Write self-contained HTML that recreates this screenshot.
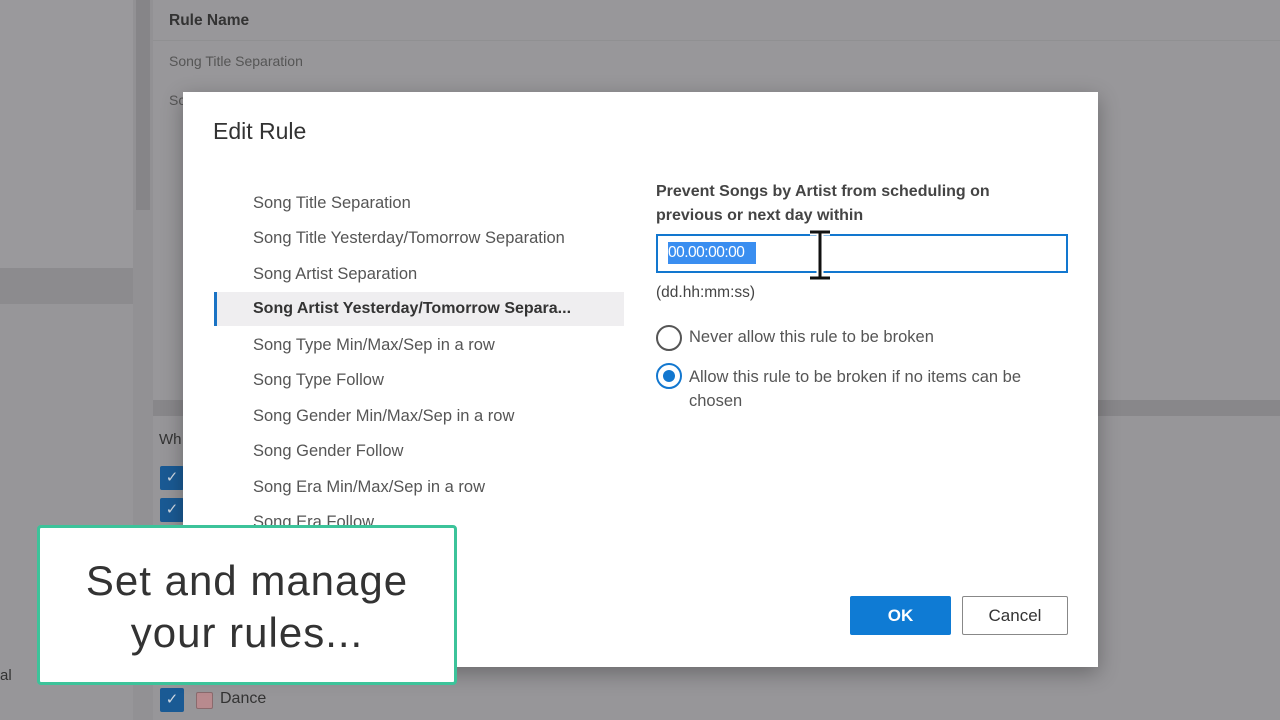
<!DOCTYPE html>
<html><head><style>
*{margin:0;padding:0;box-sizing:border-box}
body{width:1280px;height:720px;overflow:hidden;background:#979699;font-family:"Liberation Sans",sans-serif;position:relative}
.a{position:absolute}
.it{position:absolute;left:253px;font-size:16.5px;color:#555;white-space:nowrap}
.cb{position:absolute;left:160px;width:24px;height:24px;background:#1a5a94;border-radius:2px;color:#cfd8e2;font-size:15px;text-align:center;line-height:24px}
</style></head><body>
<div class="a" style="left:0;top:0;width:133px;height:268px;background:#9a999c"></div>
<div class="a" style="left:0;top:268px;width:133px;height:36px;background:#8c8b8e"></div>
<div class="a" style="left:133px;top:0;width:20px;height:720px;background:#929194"></div>
<div class="a" style="left:136px;top:0;width:14px;height:210px;background:#868588"></div>
<div class="a" style="left:153px;top:0;width:1127px;height:400px;background:#98979a"></div>
<div class="a" style="left:153px;top:40px;width:1127px;height:1px;background:#909092"></div>
<div class="a" style="left:169px;top:12px;font-size:15.5px;font-weight:bold;color:#333">Rule Name</div>
<div class="a" style="left:169px;top:53px;font-size:14px;color:#555">Song Title Separation</div>
<div class="a" style="left:169px;top:92px;font-size:14px;color:#555">Sc</div>
<div class="a" style="left:153px;top:400px;width:1127px;height:16px;background:#88878a"></div>
<div class="a" style="left:159px;top:431px;font-size:15px;color:#333">Wh</div>
<div class="cb" style="top:466px">✓</div>
<div class="cb" style="top:498px">✓</div>
<div class="cb" style="top:688px">✓</div>
<div class="a" style="left:196px;top:692px;width:17px;height:17px;background:#b88a8e;border:1px solid #8a6a6d;border-radius:2px"></div>
<div class="a" style="left:220px;top:690px;font-size:16px;color:#333">Dance</div>
<div class="a" style="left:0;top:667px;font-size:15px;color:#333">al</div>

<div class="a" style="left:183px;top:92px;width:915px;height:575px;background:#fff;box-shadow:0 6px 20px rgba(0,0,0,.3)"></div>
<div class="a" style="left:213px;top:118px;font-size:23px;color:#333">Edit Rule</div>
<div class="a" style="left:214px;top:292px;width:410px;height:34px;background:#efeef0;border-left:3px solid #1a73c4"></div>
<div class="it" style="top:194px">Song Title Separation</div>
<div class="it" style="top:229px">Song Title Yesterday/Tomorrow Separation</div>
<div class="it" style="top:265px">Song Artist Separation</div>
<div class="it" style="top:300px;font-weight:bold;color:#333;font-size:16px">Song Artist Yesterday/Tomorrow Separa...</div>
<div class="it" style="top:336px">Song Type Min/Max/Sep in a row</div>
<div class="it" style="top:371px">Song Type Follow</div>
<div class="it" style="top:407px">Song Gender Min/Max/Sep in a row</div>
<div class="it" style="top:442px">Song Gender Follow</div>
<div class="it" style="top:478px">Song Era Min/Max/Sep in a row</div>
<div class="it" style="top:513px">Song Era Follow</div>

<div class="a" style="left:656px;top:180px;font-size:16px;line-height:24px;color:#444;width:420px;font-weight:bold">Prevent Songs by Artist from scheduling on<br>previous or next day within</div>
<div class="a" style="left:656px;top:234px;width:412px;height:39px;border:2px solid #1277cf"></div>
<div class="a" style="left:668px;top:242px;width:88px;height:22px;background:#3a8ef0"></div>
<div class="a" style="left:668px;top:244px;font-size:15.5px;color:#fff;letter-spacing:-0.5px">00.00:00:00</div>
<div class="a" style="left:656px;top:284px;font-size:15.5px;color:#444">(dd.hh:mm:ss)</div>
<div class="a" style="left:656px;top:325px;width:26px;height:26px;border:2px solid #555;border-radius:50%"></div>
<div class="a" style="left:689px;top:328px;font-size:16.5px;color:#555">Never allow this rule to be broken</div>
<div class="a" style="left:656px;top:363px;width:26px;height:26px;border:2px solid #1277cf;border-radius:50%"></div>
<div class="a" style="left:663px;top:370px;width:12px;height:12px;background:#1277cf;border-radius:50%"></div>
<div class="a" style="left:689px;top:365px;font-size:16.5px;line-height:24px;color:#555;width:375px">Allow this rule to be broken if no items can be chosen</div>
<svg class="a" style="left:806px;top:228px" width="28" height="54"><path d="M4 4h20M14 4v46M4 50h20" stroke="#fff" stroke-width="7" fill="none"/><path d="M4 4h20M14 4v46M4 50h20" stroke="#111" stroke-width="3" fill="none"/></svg>
<div class="a" style="left:850px;top:596px;width:101px;height:39px;background:#0f7bd4;border-radius:2px;color:#fff;font-size:17px;font-weight:bold;text-align:center;line-height:39px">OK</div>
<div class="a" style="left:962px;top:596px;width:106px;height:39px;border:1px solid #888;border-radius:2px;color:#333;font-size:17px;text-align:center;line-height:37px">Cancel</div>

<div class="a" style="left:37px;top:525px;width:420px;height:160px;background:#fff;border:3px solid #3cc39a;border-radius:4px;text-align:center;font-size:42px;line-height:52px;color:#333;padding-top:27px;letter-spacing:1px;white-space:nowrap">Set and manage<br>your rules...</div>
</body></html>
